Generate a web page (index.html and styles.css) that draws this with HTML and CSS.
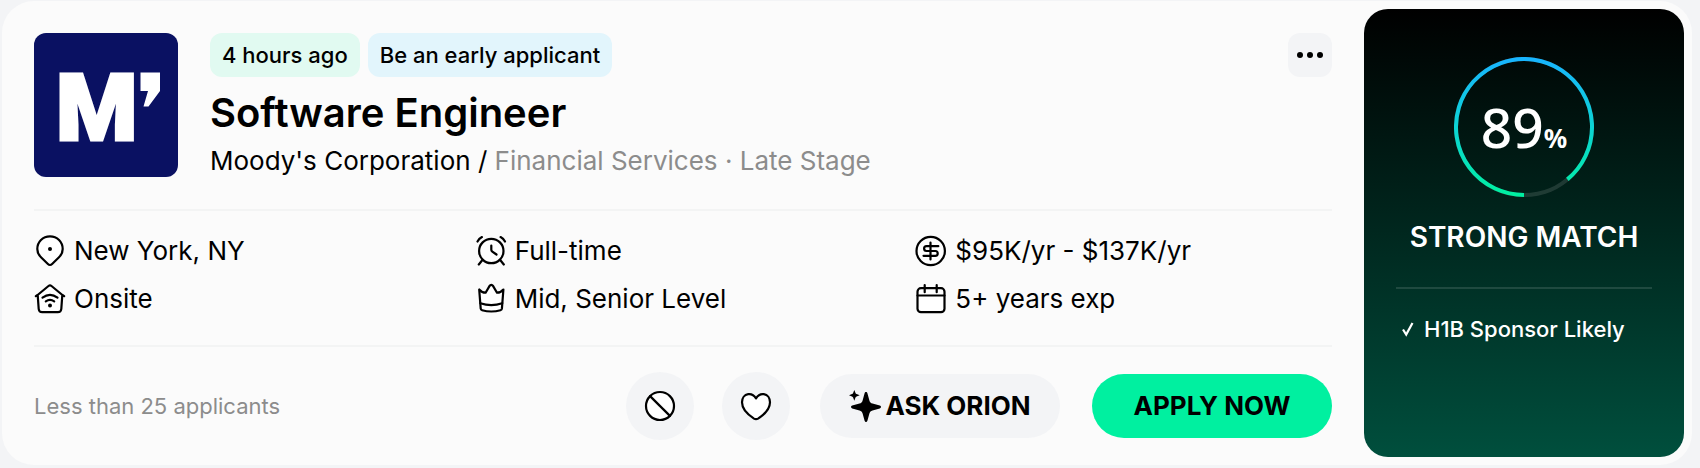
FILE: index.html
```html
<!DOCTYPE html>
<html lang="en">
<head>
<meta charset="utf-8">
<meta name="viewport" content="width=device-width, initial-scale=1">
<title>Software Engineer – Moody's Corporation</title>
<link rel="stylesheet" href="styles.css">
</head>
<body>
<article class="job-card">
  <div class="job-main">
    <header class="job-header">
      <svg class="logo" viewBox="0 0 144 144" role="img" aria-label="Moody's logo">
        <rect width="144" height="144" fill="#0a1162"/>
        <text class="logo-text" x="22" y="107">M</text>
        <path d="M106.500 39.500H126V58l-11.500 15.500h-5L114 58h-7.500z" fill="#fff"/>
      </svg>
      <div class="job-heading">
        <div class="tags">
          <span class="tag tag-time">4 hours ago</span>
          <span class="tag tag-early">Be an early applicant</span>
        </div>
        <h2 class="title">Software Engineer</h2>
        <p class="company">Moody's Corporation / <span class="muted">Financial Services · Late Stage</span></p>
      </div>
      <button class="more" type="button" aria-label="More options">
        <svg class="icon" viewBox="0 0 32 32"><g fill="#000" stroke="none"><circle cx="6" cy="16" r="3"/><circle cx="16" cy="16" r="3"/><circle cx="26" cy="16" r="3"/></g></svg>
      </button>
    </header>

    <ul class="details">
      <li class="detail">
        <svg class="icon" viewBox="0 0 32 32"><path d="M16 30c-.8 0-1.500-.4-2.100-1L7 22.200C4.600 19.900 3.300 17.500 3.300 14 3.300 6.800 8.800 1.300 16 1.300S28.700 6.800 28.700 14c0 3.500-1.300 5.900-3.700 8.200L18.100 29c-.6.600-1.300 1-2.100 1z"/><circle cx="16" cy="14" r="2" fill="#000" stroke="none"/></svg>
        New York, NY
      </li>
      <li class="detail">
        <svg class="icon" viewBox="0 0 32 32"><circle cx="16.300" cy="16" r="12.200"/><path fill="none" d="M2.500 6.500c1-2 2.400-3.400 4.400-4.400M30 6.500c-1-2-2.400-3.400-4.400-4.400M7 25.500l-3.200 4M25.600 25.500l3.200 4M16.300 10.500v4.200c0 .8.300 1.400 1 1.900l4.200 2.900"/></svg>
        Full-time
      </li>
      <li class="detail">
        <svg class="icon" viewBox="0 0 32 32"><circle cx="15.700" cy="16" r="14.200"/><path fill="none" d="M15.500 7.500v17M23.300 11.200H11.500a2.400 2.400 0 0 0 0 4.800h8.800a2.400 2.400 0 0 1 0 4.800H8.500"/></svg>
        $95K/yr - $137K/yr
      </li>
      <li class="detail">
        <svg class="icon" viewBox="0 0 32 32"><path d="M1.800 13.200L3.600 12 14.500 3c1-.8 2-.8 3 0l10.900 9 1.800 1.200M3.700 12.200l1 13.800c.2 2 1.500 3.200 3.500 3.200h15.600c2 0 3.300-1.200 3.500-3.200l1-13.800"/><path fill="none" d="M8.500 14.600c4.600-3.400 10.400-3.400 15 0M11.800 18.400c2.600-1.900 5.800-1.900 8.400 0"/><circle cx="16" cy="22.500" r="2" fill="#000" stroke="none"/></svg>
        Onsite
      </li>
      <li class="detail">
        <svg class="icon" viewBox="0 0 32 32"><path d="M4.200 6.500l1.500 19.200c.1.900.5 1.300 1.400 1.500 6 1.700 12.400 1.700 18.400 0 .9-.2 1.300-.6 1.400-1.500L28.400 6.500c-1.700 2.100-3.500 3.200-6.400 3.200L18 2.900c-.9-1.500-2.500-1.500-3.400 0l-4 6.800c-2.900 0-4.700-1.100-6.400-3.200z"/><path fill="none" d="M5.300 20.200c7.200 2.400 14.800 2.400 22 0"/></svg>
        Mid, Senior Level
      </li>
      <li class="detail">
        <svg class="icon" viewBox="0 0 32 32"><rect x="2.500" y="5.200" width="27" height="24" rx="3.500"/><path fill="none" d="M2.500 12.500h27M9.700 2v7.200M21.700 2v7.200"/></svg>
        5+ years exp
      </li>
    </ul>

    <footer class="job-footer">
      <span class="applicants">Less than 25 applicants</span>
      <div class="actions">
        <div class="rounds">
          <button class="round" type="button" aria-label="Not interested">
            <svg class="icon" viewBox="0 0 32 32"><circle cx="16" cy="16" r="14"/><path d="M6.100 6.100l19.800 19.800"/></svg>
          </button>
          <button class="round" type="button" aria-label="Save job">
            <svg class="icon" viewBox="0 0 32 32"><path d="M16 8.400C13.800 4.800 11 3.800 8.200 4.200 4.400 4.700 2 8 2 12.300c0 6.400 5.500 12.200 12 16.300 1.500.9 2.500.9 4 0 6.500-4.100 12-9.900 12-16.300 0-4.300-2.400-7.600-6.200-8.100C21 3.800 18.200 4.800 16 8.400z"/></svg>
          </button>
        </div>
        <div class="pills">
          <button class="pill pill-ask" type="button">
            <svg class="icon" viewBox="0 0 32 32"><path fill="#000" stroke="none" d="M17 2c.7 0 1.200.5 1.400 1.200l2 7.300c.5 1.700 1.400 2.600 3.100 3.100l7.300 2c1.600.5 1.600 2.300 0 2.800l-7.300 2c-1.700.5-2.600 1.400-3.100 3.100l-2 7.300c-.5 1.600-2.300 1.600-2.800 0l-2-7.300c-.5-1.700-1.400-2.600-3.100-3.100l-7.300-2c-1.600-.5-1.600-2.300 0-2.800l7.300-2c1.700-.5 2.600-1.400 3.100-3.100l2-7.300C15.800 2.500 16.300 2 17 2zM5.300 0l1.200 3c.2.600.5.900 1.100 1.100l3.100 1.200-3.100 1.200c-.6.200-.9.500-1.100 1.100l-1.200 3.100-1.200-3.100C3.900 7 3.600 6.700 3 6.500L0 5.300l3-1.200c.6-.2.900-.5 1.100-1.100z"/></svg>
            ASK ORION
          </button>
          <button class="pill pill-apply" type="button">APPLY NOW</button>
        </div>
      </div>
    </footer>
  </div>

  <aside class="match">
    <div class="score">
      <svg class="ring" viewBox="0 0 140 140" aria-hidden="true">
        <defs>
          <linearGradient id="ring-gradient" gradientUnits="userSpaceOnUse" x1="70" y1="0" x2="70" y2="140">
            <stop offset="0" stop-color="#18b4ff"/>
            <stop offset="0.500" stop-color="#0cd4d4"/>
            <stop offset="1" stop-color="#00f0a0"/>
          </linearGradient>
        </defs>
        <circle cx="70" cy="70" r="68" fill="none" stroke="#fff" stroke-opacity="0.120" stroke-width="4"/>
        <path d="M70 138A68 68 0 1 1 113.350 122.390" fill="none" stroke="url(#ring-gradient)" stroke-width="4"/>
      </svg>
      <div class="score-value">89<span class="percent">%</span></div>
    </div>
    <h3 class="match-title">STRONG MATCH</h3>
    <ul class="reasons">
      <li class="reason">
        <svg class="check" viewBox="0 0 16 24" aria-hidden="true"><path d="M3 12.500l3.200 5L12.500 6" fill="none" stroke="#fff" stroke-width="2.200"/></svg>
        H1B Sponsor Likely
      </li>
    </ul>
  </aside>
</article>
</body>
</html>
```

FILE: styles.css
```css
* {
  box-sizing: border-box;
}

body {
  margin: 0;
  padding: 1px 8px 3px 2px;
  background: #f3f4f6;
  color: #000;
  font-family: Inter, "Liberation Sans", sans-serif;
  font-size: 26px;
  line-height: 32px;
}

h2, h3, p, ul {
  margin: 0;
  padding: 0;
}

ul {
  list-style: none;
}

button {
  border: 0;
  padding: 0;
  color: inherit;
  font: inherit;
  cursor: pointer;
}

.job-card {
  display: flex;
  padding: 0 8px 0 32px;
  gap: 32px;
  border-radius: 32px;
  background: #fbfbfb;
}

.job-main {
  flex: 1;
  min-width: 0;
}

.job-header {
  display: flex;
  align-items: flex-start;
  gap: 32px;
  padding: 32px 0;
}

.logo {
  flex: none;
  width: 144px;
  height: 144px;
  border-radius: 12px;
}

.logo-text {
  fill: #fff;
  stroke: #fff;
  stroke-width: 3;
  font-family: Roboto, sans-serif;
  font-size: 93px;
  font-weight: 900;
}

.job-heading {
  flex: 1;
}

.tags {
  display: flex;
  gap: 8px;
}

.tag {
  padding: 6px 12px;
  border-radius: 12px;
  font-size: 22px;
  font-weight: 500;
}

.tag-time {
  background: #e1faf1;
}

.tag-early {
  background: #e2f5fc;
}

.title {
  margin: 12px 0 8px;
  font-size: 40px;
  font-weight: 600;
  line-height: 48px;
}

.muted,
.applicants {
  color: #8c8c8c;
}

.more {
  display: grid;
  place-items: center;
  width: 44px;
  height: 44px;
  border-radius: 12px;
  background: #f3f4f6;
}

.icon {
  flex: none;
  width: 32px;
  height: 32px;
  fill: #fff;
  stroke: #000;
  stroke-width: 2.2;
  stroke-linecap: round;
  stroke-linejoin: round;
}

.more .icon {
  width: 32px;
}

.details {
  display: grid;
  grid-template-columns: repeat(3, 1fr);
  gap: 16px 24px;
  padding: 24px 0 30px;
  border: solid #f3f4f4;
  border-width: 2px 0;
}

.detail {
  display: flex;
  align-items: center;
  gap: 8px;
}

.job-footer {
  display: flex;
  align-items: center;
  justify-content: space-between;
  padding: 25px 0;
}

.applicants {
  font-size: 22px;
}

.actions {
  display: flex;
  align-items: center;
  gap: 30px;
}

.rounds {
  display: flex;
  gap: 28px;
}

.round {
  display: grid;
  place-items: center;
  width: 68px;
  height: 68px;
  border-radius: 50%;
  background: #f3f4f6;
}

.pills {
  display: flex;
  gap: 32px;
}

.pill {
  display: flex;
  align-items: center;
  justify-content: center;
  gap: 4px;
  width: 240px;
  height: 64px;
  border-radius: 32px;
  font-weight: 700;
}

.pill-ask {
  background: #f3f4f6;
}

.pill-apply {
  background: #00f0a0;
}

.match {
  flex: none;
  width: 320px;
  margin: 8px 0;
  padding: 48px 32px;
  border-radius: 24px;
  background: linear-gradient(#000, #004f3d);
  color: #fff;
}

.score {
  display: grid;
  place-items: center;
}

.ring,
.score-value {
  grid-area: 1 / 1;
}

.ring {
  width: 140px;
  height: 140px;
}

.score-value {
  padding-top: 10px;
  font-family: "Noto Sans", sans-serif;
  font-size: 55px;
  font-weight: 500;
}

.percent {
  font-size: 26px;
  font-weight: 700;
}

.match-title {
  margin: 24px 0 34px;
  font-size: 28px;
  font-weight: 600;
  text-align: center;
  white-space: nowrap;
}

.reasons {
  padding: 24px 4px 0;
  border-top: 2px solid rgba(255, 255, 255, 0.12);
  font-size: 22px;
  font-weight: 500;
}

.reason {
  display: flex;
  align-items: center;
  gap: 8px;
}

.check {
  width: 16px;
  height: 24px;
}
```
